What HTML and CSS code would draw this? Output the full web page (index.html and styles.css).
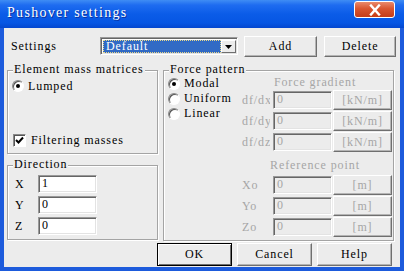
FILE: index.html
```html
<!DOCTYPE html>
<html lang="en">

<head>
    <meta charset="utf-8">
    <meta name="viewport" content="width=device-width, initial-scale=1.0">
    <title>Pushover settings</title>
    <link rel="stylesheet" href="styles.css">
</head>

<body>
    <div class="window">
        <div class="titlebar">
            <span class="title">Pushover settings</span>
            <button class="close">
                <svg width="14" height="12" viewBox="0 0 14 12">
                    <path d="M3 1.5 L11 10.5 M11 1.5 L3 10.5" stroke="#fff" stroke-width="2.4" stroke-linecap="square" />
                </svg>
            </button>
        </div>

        <div class="client">
            <div class="settings-row">
                <span class="settings-label">Settings</span>
                <div class="combo">
                    <span class="combo-value">Default</span>
                    <span class="combo-drop">
                        <svg width="7" height="4" viewBox="0 0 7 4"><polygon points="0,0 7,0 3.5,4" fill="#000" /></svg>
                    </span>
                </div>
                <button class="btn btn-add">Add</button>
                <button class="btn btn-delete">Delete</button>
            </div>

            <div class="groups">
                <div class="left-col">
                    <div class="group group-mass">
                        <span class="group-title">Element mass matrices</span>
                        <label class="option"><span class="radio checked"></span>Lumped</label>
                        <label class="option check-row">
                            <span class="checkbox">
                                <svg width="9" height="9" viewBox="0 0 9 9"><path d="M1 4 L3.5 6.5 L8 1.5" stroke="#000" stroke-width="2" fill="none" /></svg>
                            </span>Filtering masses
                        </label>
                    </div>

                    <div class="group group-direction">
                        <span class="group-title">Direction</span>
                        <div class="field-row"><span class="axis">X</span><span class="input">1</span></div>
                        <div class="field-row"><span class="axis">Y</span><span class="input">0</span></div>
                        <div class="field-row"><span class="axis">Z</span><span class="input">0</span></div>
                    </div>
                </div>

                <div class="group group-force">
                    <span class="group-title">Force pattern</span>
                    <div class="force-body">
                        <div class="radios">
                            <label class="option"><span class="radio checked"></span>Modal</label>
                            <label class="option"><span class="radio"></span>Uniform</label>
                            <label class="option"><span class="radio"></span>Linear</label>
                        </div>
                        <div class="panel">
                            <div class="sub-title">Force gradient</div>
                            <div class="unit-row"><span class="unit-label">df/dx</span><span class="input disabled">0</span><span class="btn disabled">[kN/m]</span></div>
                            <div class="unit-row"><span class="unit-label">df/dy</span><span class="input disabled">0</span><span class="btn disabled">[kN/m]</span></div>
                            <div class="unit-row"><span class="unit-label">df/dz</span><span class="input disabled">0</span><span class="btn disabled">[kN/m]</span></div>

                            <div class="sub-title ref-title">Reference point</div>
                            <div class="unit-row"><span class="unit-label">Xo</span><span class="input disabled">0</span><span class="btn disabled">[m]</span></div>
                            <div class="unit-row"><span class="unit-label">Yo</span><span class="input disabled">0</span><span class="btn disabled">[m]</span></div>
                            <div class="unit-row"><span class="unit-label">Zo</span><span class="input disabled">0</span><span class="btn disabled">[m]</span></div>
                        </div>
                    </div>
                </div>
            </div>

            <div class="actions">
                <button class="btn btn-default">OK</button>
                <button class="btn">Cancel</button>
                <button class="btn">Help</button>
            </div>
        </div>
    </div>
</body>

</html>
```

FILE: styles.css
```css
body {
    margin: 0;
    font-family: "Liberation Serif", serif;
    font-size: 12px;
    letter-spacing: 0.9px;
    color: #000;
}

.window {
    width: 404px;
    height: 271px;
    display: flex;
    flex-direction: column;
    background: #1d5bdc;
}

.titlebar {
    height: 28px;
    display: flex;
    justify-content: space-between;
    align-items: flex-start;
    padding: 0 9px 0 7px;
    background: linear-gradient(#3f8df4 0%, #1e6cf0 18%, #0b5ce8 50%, #0656e3 82%, #0447cf 100%);
}

.title {
    color: #fff;
    font-size: 14px;
    letter-spacing: 1.3px;
    line-height: 26px;
    text-shadow: 1px 1px 0 #0b2f9a;
}

.close {
    margin-top: 1px;
    width: 41px;
    height: 17px;
    padding: 0;
    display: flex;
    align-items: center;
    justify-content: center;
    border: 1px solid #fff;
    border-radius: 3px;
    background: linear-gradient(#e98a6c, #d9552f 45%, #c53c17);
}

.client {
    flex: 1;
    margin: 0 4px 4px;
    background: #ececec;
}

/* top row */

.settings-row {
    display: flex;
    align-items: flex-start;
    height: 21px;
    margin-top: 8px;
    padding-left: 7px;
}

.settings-label {
    width: 89px;
    line-height: 21px;
}

.combo {
    width: 138px;
    height: 18px;
    margin-top: 1px;
    box-sizing: border-box;
    display: flex;
    padding: 2px 1px 1px 2px;
    background: #fff;
    border: 1px solid;
    border-color: #999 #fff #fff #999;
    box-shadow: inset 1px 1px #666, inset -1px -1px #e3e3e3;
}

.combo-value {
    flex: 1;
    color: #fff;
    background: #316ac5;
    outline: 1px dotted #e8d88a;
    outline-offset: -1px;
    padding-left: 3px;
    line-height: 13px;
}

.combo-drop {
    width: 15px;
    box-sizing: border-box;
    display: flex;
    align-items: center;
    justify-content: center;
    background: #ececec;
    border: 1px solid;
    border-color: #fff #6f6f6f #6f6f6f #fff;
}

.btn {
    box-sizing: border-box;
    display: flex;
    align-items: center;
    justify-content: center;
    padding: 0;
    font: inherit;
    letter-spacing: inherit;
    color: #000;
    background: #ececec;
    border: 1px solid;
    border-color: #fff #6f6f6f #6f6f6f #fff;
    box-shadow: inset -1px -1px #b4b4b4;
}

.btn-add {
    width: 73px;
    height: 21px;
    margin-left: 6px;
}

.btn-delete {
    width: 72px;
    height: 21px;
    margin-left: 7px;
}

/* groups */

.groups {
    display: flex;
    margin-top: 13px;
    padding-left: 3px;
}

.group {
    position: relative;
    box-sizing: border-box;
    border: 1px solid #a4a4a4;
    box-shadow: inset 1px 1px #fff, 1px 1px #fff;
}

.group-title {
    position: absolute;
    top: -8px;
    left: 5px;
    padding: 0 1px;
    line-height: 12px;
    background: #ececec;
}

.group-mass {
    width: 151px;
    height: 84px;
    padding: 8px 0 0 4px;
}

.option {
    display: flex;
    align-items: center;
    height: 14px;
}

.radio {
    position: relative;
    width: 12px;
    height: 12px;
    margin-right: 4px;
    box-sizing: border-box;
    border-radius: 50%;
    background: #fff;
    border: 1px solid;
    border-color: #8a8a8a #fff #fff #8a8a8a;
    box-shadow: inset 1px 1px #555;
}

.radio.checked::after {
    content: "";
    position: absolute;
    left: 3px;
    top: 3px;
    width: 4px;
    height: 4px;
    border-radius: 50%;
    background: #000;
}

.check-row {
    margin-top: 40px;
}

.checkbox {
    width: 13px;
    height: 13px;
    margin: 0 5px 0 1px;
    box-sizing: border-box;
    display: flex;
    align-items: center;
    justify-content: center;
    background: #fff;
    border: 1px solid;
    border-color: #8a8a8a #fff #fff #8a8a8a;
    box-shadow: inset 1px 1px #555;
}

.group-direction {
    width: 151px;
    height: 75px;
    margin-top: 11px;
    padding: 9px 0 0 7px;
}

.field-row {
    display: flex;
    height: 18px;
    margin-bottom: 3px;
}

.axis {
    width: 23px;
    line-height: 18px;
}

.input {
    width: 59px;
    height: 18px;
    box-sizing: border-box;
    padding-left: 3px;
    line-height: 15px;
    background: #fff;
    border: 1px solid;
    border-color: #999 #fff #fff #999;
    box-shadow: inset 1px 1px #666, inset -1px -1px #e3e3e3;
}

.input.disabled {
    color: #a6a6a6;
    background: #ececec;
}

.btn.disabled {
    color: #a6a6a6;
}

/* force pattern */

.group-force {
    width: 231px;
    height: 171px;
    margin-left: 5px;
    padding-left: 4px;
}

.force-body {
    display: flex;
}

.radios {
    width: 74px;
    padding-top: 5px;
}

.radios .option {
    height: 15px;
}

.panel {
    width: 150px;
    padding-top: 5px;
    color: #a6a6a6;
}

.sub-title {
    width: 146px;
    text-align: center;
    line-height: 12px;
    margin-bottom: 2px;
}

.ref-title {
    margin-top: 7px;
    margin-bottom: 4px;
}

.unit-row {
    display: flex;
    align-items: center;
    height: 20px;
    margin-bottom: 1px;
}

.unit-label {
    width: 28px;
    margin-right: 3px;
    overflow: hidden;
    white-space: nowrap;
}

.unit-row .btn {
    width: 59px;
    height: 20px;
    margin-left: 1px;
}

/* bottom buttons */

.actions {
    display: flex;
    justify-content: flex-end;
    gap: 5px;
    margin-top: 2px;
    padding-right: 8px;
}

.actions .btn {
    width: 75px;
    height: 23px;
}

.btn-default {
    border: 1px solid #000;
    box-shadow: inset 1px 1px #fff, inset -1px -1px #6f6f6f;
}
```
